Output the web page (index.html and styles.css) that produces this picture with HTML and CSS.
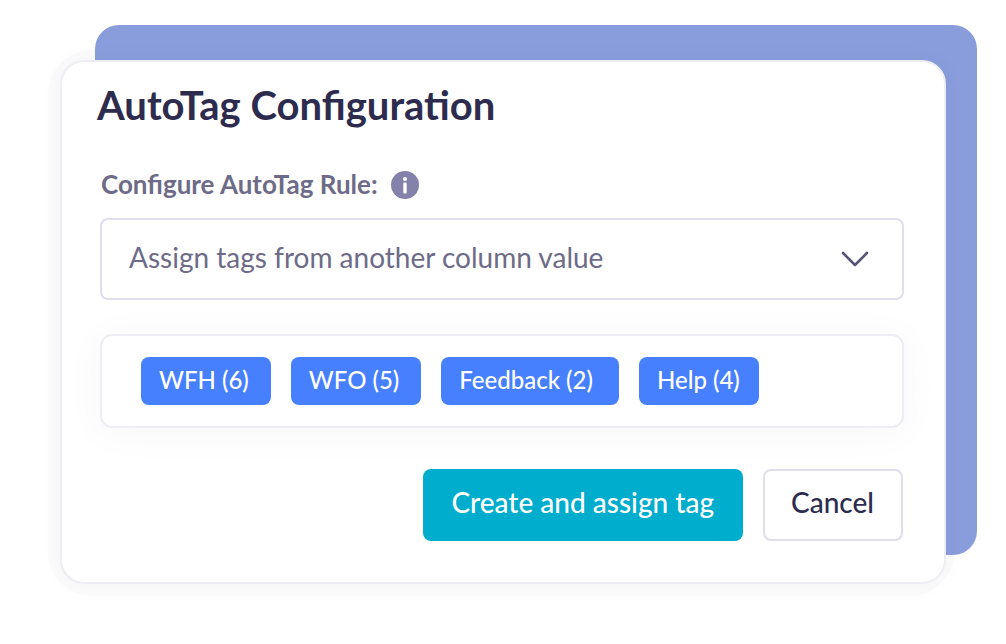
FILE: index.html
```html
<!DOCTYPE html>
<html lang="en">
<head>
<meta charset="utf-8">
<meta name="viewport" content="width=device-width, initial-scale=1">
<title>AutoTag Configuration</title>
<link rel="stylesheet" href="styles.css">
</head>
<body>
<main class="stage">
  <form class="card">
    <h1 class="title">AutoTag Configuration</h1>
    <div class="label-row">
      <label class="label" for="rule">Configure AutoTag Rule:</label>
      <svg class="info" viewBox="0 0 28 28" role="img" aria-label="Information">
        <circle cx="14" cy="14" r="14" fill="#8482aa"/>
        <circle cx="14" cy="8" r="2" fill="#fff"/>
        <rect x="12.300" y="11.500" width="3.400" height="11" rx="1.200" fill="#fff"/>
      </svg>
    </div>
    <div class="select-wrap">
      <select class="select" id="rule">
        <option>Assign tags from another column value</option>
      </select>
      <svg class="chevron" viewBox="0 0 28 16" aria-hidden="true">
        <path d="M2 2l12 12L26 2" fill="none" stroke="#575478" stroke-width="2.600" stroke-linecap="round" stroke-linejoin="round"/>
      </svg>
    </div>
    <ul class="tags">
      <li class="tag">WFH (6)</li>
      <li class="tag">WFO (5)</li>
      <li class="tag tag-wide">Feedback (2)</li>
      <li class="tag tag-narrow">Help (4)</li>
    </ul>
    <div class="actions">
      <button class="btn btn-primary" type="button">Create and assign tag</button>
      <button class="btn btn-secondary" type="button">Cancel</button>
    </div>
  </form>
</main>
</body>
</html>
```
FILE: styles.css
```css
* {
  box-sizing: border-box;
}

body {
  margin: 0;
  background: #fff;
  color: #2d2c4e;
  font-family: Lato, "Liberation Sans", sans-serif;
}

.stage {
  position: relative;
  z-index: 0;
  margin: 60px;
}

.stage::before {
  content: "";
  position: absolute;
  z-index: -1;
  top: -35px;
  right: -31px;
  bottom: 29px;
  left: 35px;
  border-radius: 24px;
  background: #899ddd;
}

.stage::after {
  content: "";
  position: absolute;
  z-index: -2;
  inset: -10px -8px -12px -12px;
  border-radius: 44px;
  background: #fbfbfb;
}

.card {
  padding: 19px 40px 41px 38px;
  border: 2px solid #ededf3;
  border-radius: 24px;
  background: #fff;
  box-shadow: 0 0 24px rgba(0, 0, 0, 0.03);
}

.title {
  margin: 0 0 0 -3px;
  font-size: 40px;
  line-height: 48px;
  font-weight: 700;
}

.label-row {
  display: flex;
  align-items: center;
  gap: 13px;
  margin-top: 42px;
  padding-left: 1px;
}

.label {
  padding-bottom: 2px;
  color: #6d6b87;
  font-size: 26px;
  line-height: 26px;
  font-weight: 700;
}

.info {
  width: 28px;
  height: 28px;
}

.select-wrap {
  display: grid;
  align-items: center;
  margin-top: 19px;
}

.select,
.chevron {
  grid-area: 1 / 1;
}

.select {
  width: 100%;
  height: 82px;
  padding: 0 72px 5px 27px;
  border: 2px solid #e0deec;
  border-radius: 8px;
  appearance: none;
  background: #fff;
  color: #6d6b87;
  font-family: inherit;
  font-size: 28px;
}

.chevron {
  justify-self: end;
  width: 28px;
  height: 16px;
  margin-right: 35px;
  pointer-events: none;
}

.tags {
  display: flex;
  flex-wrap: wrap;
  gap: 20px;
  margin: 34px 0 0;
  padding: 21px 39px;
  border: 2px solid #ededf3;
  border-radius: 12px;
  background: #fff;
  box-shadow: 0 4px 40px rgba(0, 0, 0, 0.04);
  list-style: none;
}

.tag {
  padding: 7px 22px 9px 18px;
  border-radius: 8px;
  background: #4680ff;
  color: #fff;
  font-size: 24px;
  line-height: 32px;
  font-weight: 500;
}

.tag-wide {
  padding-right: 26px;
}

.tag-narrow {
  padding-right: 19px;
}

.actions {
  display: flex;
  flex-wrap: wrap;
  justify-content: flex-end;
  gap: 20px;
  margin-top: 41px;
  padding-right: 1px;
}

.btn {
  padding: 15px 27px 21px 26px;
  border: 2px solid transparent;
  border-radius: 8px;
  font-family: inherit;
  font-size: 28px;
  line-height: 32px;
  font-weight: 500;
}

.btn-primary {
  background: #00adcd;
  color: #fff;
}

.btn-secondary {
  border-color: #e0deec;
  background: #fff;
  color: #2d2c4e;
}
```
